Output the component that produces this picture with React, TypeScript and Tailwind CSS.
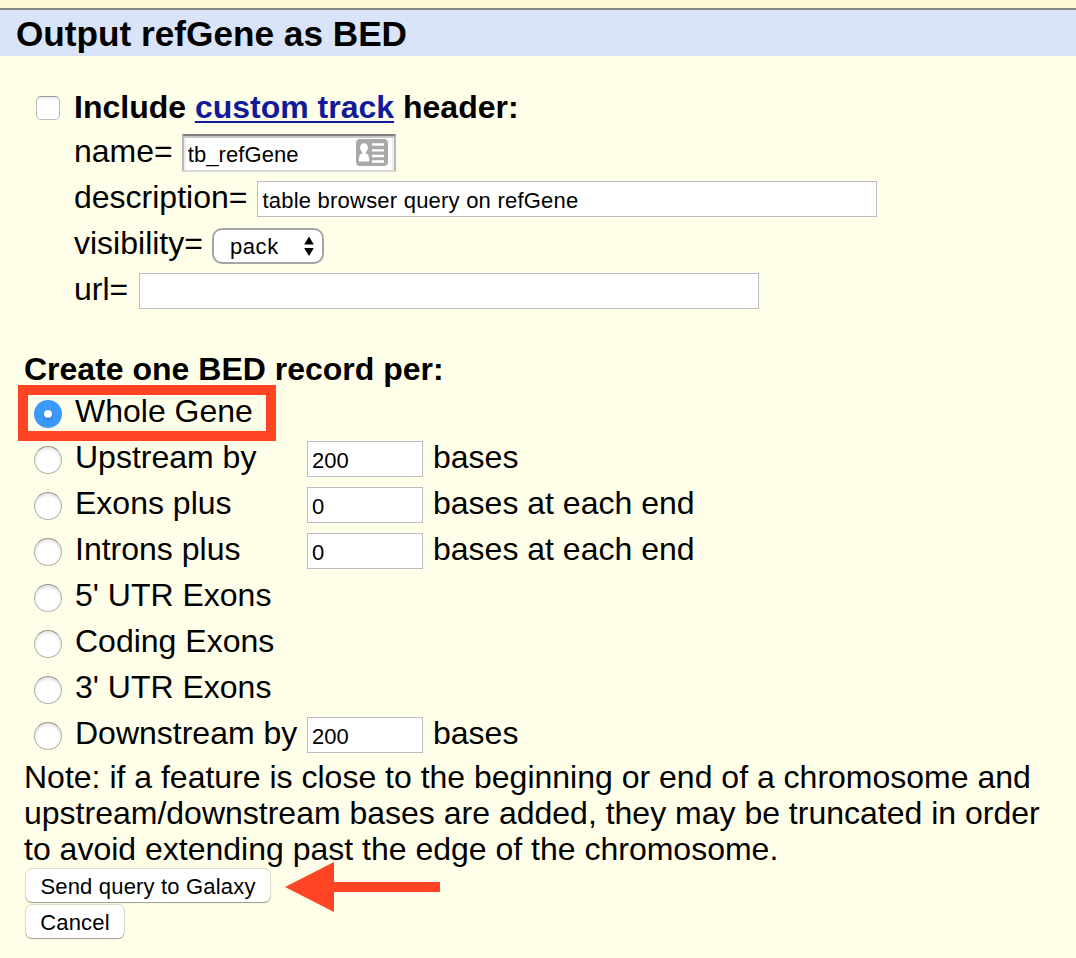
import type { ReactNode } from "react";

const labelText = "block whitespace-pre leading-[36px]";

function Field({ value, className }: { value: string; className: string }) {
  return (
    <input
      type="text"
      defaultValue={value}
      className={"mt-[2px] h-9 shrink-0 rounded-none border border-[#bcbcc4] bg-white pl-[4px] pt-[3px] text-[22px] leading-[26px] outline-none " + className}
    />
  );
}

function ContactIcon() {
  return (
    <svg className="absolute right-[8px] top-[5px]" width="32" height="28" viewBox="0 0 32 28">
      <rect x="0" y="0" width="32" height="27" rx="4" fill="#a9a9a9" />
      <ellipse cx="8" cy="8.700" rx="3.900" ry="4.500" fill="#fff" />
      <path d="M6.200 11h3.600v3.500c2.500.8 3.400 2.500 3.400 8H2.800c0-5.500.9-7.200 3.400-8z" fill="#fff" />
      <path d="M16 5.500H28M16 11.300H28M16 17H28M16 22.500H28" stroke="#fff" strokeWidth="2.300" />
    </svg>
  );
}

function HeaderRow({ label, children }: { label: string; children: ReactNode }) {
  return (
    <div className="flex h-[46px] items-start gap-[9px] pl-[74px]">
      <span className={labelText}>{label}</span>
      {children}
    </div>
  );
}

type Option = { label: string; value?: string; suffix?: string };

const options: Option[] = [
  { label: "Whole Gene" },
  { label: "Upstream by", value: "200", suffix: "bases" },
  { label: "Exons plus", value: "0", suffix: "bases at each end" },
  { label: "Introns plus", value: "0", suffix: "bases at each end" },
  { label: "5' UTR Exons" },
  { label: "Coding Exons" },
  { label: "3' UTR Exons" },
  { label: "Downstream by", value: "200", suffix: "bases" },
];

function Radio({ checked }: { checked: boolean }) {
  return checked ? (
    <span className="mt-[7px] flex size-7 shrink-0 items-center justify-center rounded-full bg-[#3b99fc]">
      <span className="size-2 rounded-full bg-white shadow-[0_1px_2px_rgba(0,0,80,0.4)]" />
    </span>
  ) : (
    <span className="mt-[7px] size-7 shrink-0 rounded-full border border-[#b3b3ac] border-t-[#96968f] bg-white shadow-[inset_0_2px_3px_rgba(0,0,0,0.13)]" />
  );
}

const buttonStyle =
  "flex h-[33px] items-start justify-center whitespace-pre rounded-[6px] bg-white text-[22px] leading-[35px] tracking-[0.18px] shadow-[0_0_0_1px_rgba(0,0,0,0.12),0_1px_1px_0_rgba(0,0,0,0.3)]";

export default function App() {
  return (
    <main className="h-[958px] w-[1076px] overflow-hidden bg-[#fffee8] font-['Liberation_Sans',Arial,sans-serif] text-[32px] text-black">
      <div className="h-2 bg-[#fff8d3]" />
      <h1 className="h-12 border-t-2 border-[#888] bg-[#d9e4f8] pl-4 pt-[3px] text-[35.2px] font-bold leading-[42px]">
        Output refGene as BED
      </h1>

      <section className="pt-[33px]">
        <div className="flex h-11 items-start pl-9">
          <span className="mt-[7px] size-6 shrink-0 rounded-[5px] border border-[#bdbdb8] border-t-[#999] bg-white shadow-[inset_0_2px_2px_rgba(0,0,0,0.08)]" />
          <span className="ml-[14px] block whitespace-pre font-bold leading-[36px]">
            Include{" "}
            <a href="#" className="text-[#121a9c] underline decoration-2 underline-offset-[3px]">
              custom track
            </a>{" "}
            header:
          </span>
        </div>
        <HeaderRow label="name=">
          <span className="relative mt-px block">
            <input
              type="text"
              defaultValue="tb_refGene"
              className="block h-[38px] w-[214px] rounded-none border-2 border-b-[#d8d8d8] border-l-[#b8b8b8] border-r-[#b8b8b8] border-t-[#7f7f7f] bg-white pl-[4px] pt-[3px] text-[22px] tracking-[0.08px] shadow-[inset_0_2px_0_#c6c6c6,inset_2px_0_0_#ededed,inset_-2px_0_0_#ededed] outline-none"
            />
            <ContactIcon />
          </span>
        </HeaderRow>
        <HeaderRow label="description=">
          <Field value="table browser query on refGene" className="ml-px w-[620px] tracking-[0.22px]" />
        </HeaderRow>
        <HeaderRow label="visibility=">
          <button className="mt-[3px] flex h-9 w-[112px] items-center justify-between rounded-[10px] border-2 border-[#a5a5a5] bg-white pl-4 pr-[7px] text-[22px] tracking-[0.6px]">
            <span className="block pt-[2px] leading-[32px]">pack</span>
            <svg width="12" height="20" viewBox="0 0 12 20" fill="#000">
              <path d="M6 0.500L10.800 8.500H1.200zM6 20L1.200 12H10.800z" />
            </svg>
          </button>
        </HeaderRow>
        <HeaderRow label="url=">
          <Field value="" className="ml-[2px] w-[620px]" />
        </HeaderRow>
      </section>

      <section className="relative pt-[34px]">
        <h2 className="h-[42px] pl-6 font-bold leading-[36px]">Create one BED record per:</h2>
        {options.map((o, i) => (
          <div key={o.label} className="flex h-[46px] items-start pl-[34px]">
            <Radio checked={i === 0} />
            <span className="ml-[13px] block w-[232px] shrink-0 whitespace-pre leading-[36px]">{o.label}</span>
            {o.value !== undefined && <Field value={o.value} className="w-[116px]" />}
            {o.suffix && <span className="ml-[10px] block whitespace-pre leading-[36px]">{o.suffix}</span>}
          </div>
        ))}
        <div className="pointer-events-none absolute left-[18px] top-[68px] h-14 w-[258px] border-[10px] border-[#ff4524]" />
      </section>

      <p className="-mt-[2px] whitespace-pre pl-6 leading-[36px]">
        Note: if a feature is close to the beginning or end of a chromosome and{"\n"}
        upstream/downstream bases are added, they may be truncated in order{"\n"}
        to avoid extending past the edge of the chromosome.
      </p>

      <div className="flex flex-col gap-[3px] pl-[26px] pt-[2px]">
        <div className="relative flex h-[33px] items-start">
          <button className={buttonStyle + " w-[244px]"}>Send query to Galaxy</button>
          <svg className="absolute left-[259px] top-[-7px]" width="156" height="50" viewBox="0 0 156 50" fill="#ff4524">
            <path d="M0 25L49 0V20H155V30H49V50z" />
          </svg>
        </div>
        <button className={buttonStyle + " w-[98px]"}>Cancel</button>
      </div>
    </main>
  );
}
